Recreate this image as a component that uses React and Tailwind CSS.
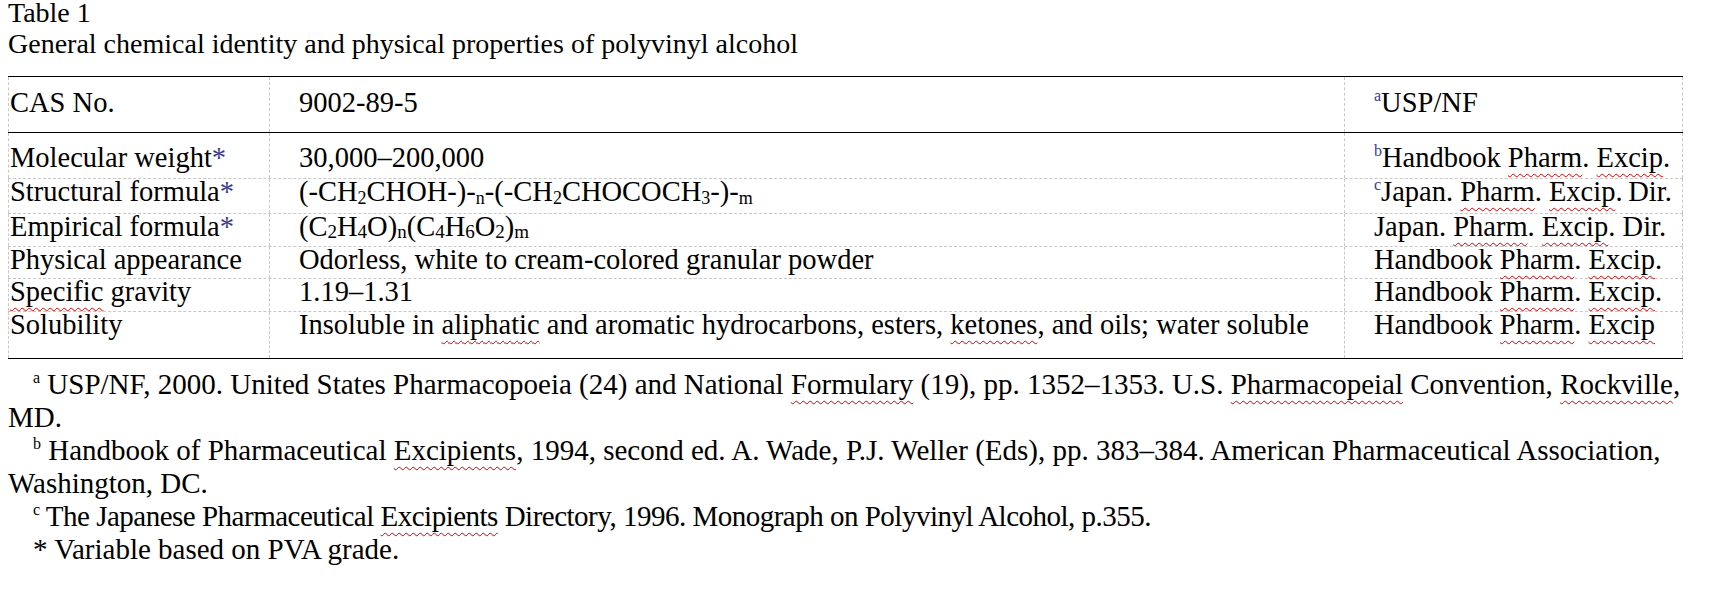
import React from "react";

const W = ({ children }) => (
  <span className="underline decoration-wavy decoration-[#e00000] decoration-1 underline-offset-[6px] [text-decoration-skip-ink:none]">
    {children}
  </span>
);

const Star = () => <span className="text-[#3a3a8a]">*</span>;

const Sup = ({ children, colored }) => (
  <sup className={colored ? "text-[16px] top-[-11px] text-[#3a3a8a]" : "text-[16px] top-[-11px]"}>{children}</sup>
);

const S = ({ children }) => <sub className="text-[18px] bottom-[-3px]">{children}</sub>;
const E = ({ children }) => <sub className="text-[19px] bottom-[-2px]">{children}</sub>;

const cell1 = "border-l border-r border-dashed border-[#c8c8c8] pl-[1px] whitespace-nowrap overflow-visible";
const cell2 = "border-r border-dashed border-[#c8c8c8] pl-[29px] whitespace-nowrap";
const cell3 = "border-r border-dashed border-[#c8c8c8] pl-[29px] whitespace-nowrap";

function Row({ rowCls, padCls, c1, c2, c3 }) {
  return (
    <div className={rowCls}>
      <div className={`${cell1} ${padCls}`}>{c1}</div>
      <div className={`${cell2} ${padCls}`}>{c2}</div>
      <div className={`${cell3} ${padCls}`}>{c3}</div>
    </div>
  );
}

export default function App() {
  return (
    <div className="min-h-[608px] w-[1718px] bg-white text-black font-['Liberation_Serif',serif]">
      <div className="pl-[8px]">
        <div className="text-[28px] leading-[26px] h-[26px]">Table 1</div>
        <div className="text-[28px] leading-[26px] h-[26px] mt-[5px]">
          General chemical identity and physical properties of polyvinyl alcohol
        </div>
      </div>

      <div className="ml-[8px] mt-[19px] w-[1675px] text-[28.5px] leading-[25px]">
        <Row
          rowCls="grid grid-cols-[262px_1075px_338px] h-[57px] border-t border-b border-black"
          padCls="pt-[13px]"
          c1="CAS No."
          c2="9002-89-5"
          c3={
            <>
              <Sup colored>a</Sup>USP/NF
            </>
          }
        />
        <Row
          rowCls="grid grid-cols-[262px_1075px_338px] h-[46px] border-b border-dashed border-[#c8c8c8]"
          padCls="pt-[12px]"
          c1={
            <>
              Molecular weight<Star />
            </>
          }
          c2="30,000–200,000"
          c3={
            <>
              <Sup colored>b</Sup>Handbook <W>Pharm</W>. <W>Excip</W>.
            </>
          }
        />
        <Row
          rowCls="grid grid-cols-[262px_1075px_338px] h-[35px] border-b border-dashed border-[#c8c8c8]"
          padCls="pt-0"
          c1={
            <>
              Structural formula<Star />
            </>
          }
          c2={
            <>
              (-CH<S>2</S>CHOH-)-<S>n</S>-(-CH<S>2</S>CHOCOCH<S>3</S>-)-<S>m</S>
            </>
          }
          c3={
            <>
              <Sup colored>c</Sup>Japan. <W>Pharm</W>. <W>Excip</W>.{"\u2009"}Dir.
            </>
          }
        />
        <Row
          rowCls="grid grid-cols-[262px_1075px_338px] h-[33px] border-b border-dashed border-[#c8c8c8]"
          padCls="pt-0"
          c1={
            <>
              Empirical formula<Star />
            </>
          }
          c2={
            <>
              (C<E>2</E>H<E>4</E>O)<E>n</E>(C<E>4</E>H<E>6</E>O<E>2</E>)<E>m</E>
            </>
          }
          c3={
            <>
              Japan. <W>Pharm</W>. <W>Excip</W>. Dir.
            </>
          }
        />
        <Row
          rowCls="grid grid-cols-[262px_1075px_338px] h-[32px] border-b border-dashed border-[#c8c8c8]"
          padCls="pt-0"
          c1="Physical appearance"
          c2="Odorless, white to cream-colored granular powder"
          c3={
            <>
              Handbook <W>Pharm</W>. <W>Excip</W>.
            </>
          }
        />
        <Row
          rowCls="grid grid-cols-[262px_1075px_338px] h-[33px] border-b border-dashed border-[#c8c8c8]"
          padCls="pt-0"
          c1={
            <>
              <W>Specific</W> gravity
            </>
          }
          c2="1.19–1.31"
          c3={
            <>
              Handbook <W>Pharm</W>. <W>Excip</W>.
            </>
          }
        />
        <Row
          rowCls="grid grid-cols-[262px_1075px_338px] h-[47px] border-b border-black"
          padCls="pt-0"
          c1="Solubility"
          c2={
            <>
              Insoluble in <W>aliphatic</W> and aromatic hydrocarbons, esters, <W>ketones</W>, and oils; water soluble
            </>
          }
          c3={
            <>
              Handbook <W>Pharm</W>. <W>Excip</W>
            </>
          }
        />
      </div>

      <div className="pl-[8px] mt-[9px] text-[29px] leading-[33px] whitespace-nowrap">
        <div className="pl-[25px]">
          <Sup>a</Sup> USP/NF, 2000. United States Pharmacopoeia (24) and National <W>Formulary</W> (19), pp. 1352–1353. U.S.{" "}
          <W>Pharmacopeial</W> Convention, <W>Rockville</W>,
        </div>
        <div>MD.</div>
        <div className="pl-[25px]">
          <Sup>b</Sup> Handbook of Pharmaceutical <W>Excipients</W>, 1994, second ed. A. Wade, P.J. Weller (Eds), pp. 383–384. American
          Pharmaceutical Association,
        </div>
        <div>Washington, DC.</div>
        <div className="pl-[25px] tracking-[-0.5px]">
          <Sup>c</Sup> The Japanese Pharmaceutical <W>Excipients</W> Directory, 1996. Monograph on Polyvinyl Alcohol, p.355.
        </div>
        <div className="pl-[25px]">* Variable based on PVA grade.</div>
      </div>
    </div>
  );
}
